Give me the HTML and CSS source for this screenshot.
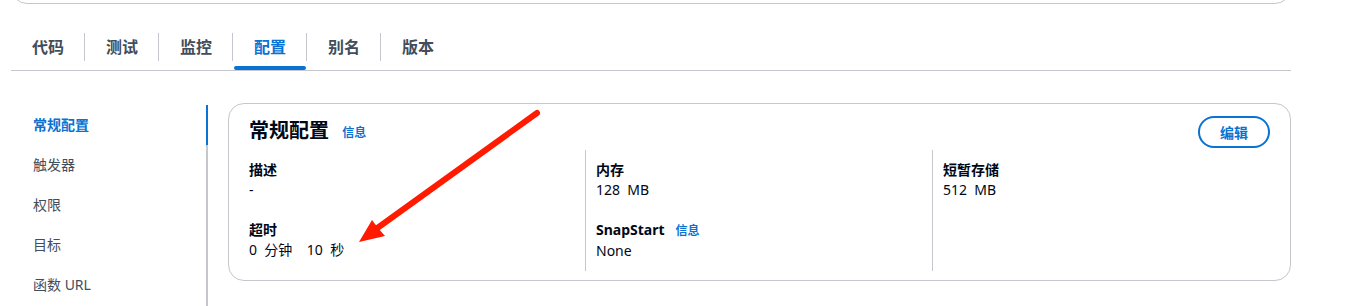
FILE: index.html
```html
<!DOCTYPE html>
<html lang="zh-CN">
<head>
    <meta charset="UTF-8">
    <title>配置</title>
    <link rel="stylesheet" href="styles.css">
</head>
<body>
    <div class="page">
        <div class="top-panel"></div>

        <div class="tabs">
            <div class="tab"><span class="tab-label">代码</span></div>
            <div class="tab"><span class="tab-label">测试</span></div>
            <div class="tab"><span class="tab-label">监控</span></div>
            <div class="tab active"><span class="tab-label">配置</span></div>
            <div class="tab"><span class="tab-label">别名</span></div>
            <div class="tab"><span class="tab-label">版本</span></div>
        </div>

        <div class="layout">
            <ul class="side-nav">
                <li class="active">常规配置</li>
                <li>触发器</li>
                <li>权限</li>
                <li>目标</li>
                <li>函数 URL</li>
            </ul>

            <div class="card">
                <div class="card-header">
                    <h2>常规配置 <a class="info">信息</a></h2>
                    <button class="btn">编辑</button>
                </div>
                <div class="columns">
                    <div class="col">
                        <div class="field">
                            <div class="label">描述</div>
                            <div class="value">-</div>
                        </div>
                        <div class="field">
                            <div class="label">超时</div>
                            <div class="value">0&nbsp;&nbsp;分钟&nbsp;&nbsp;&nbsp;&nbsp;10&nbsp;&nbsp;秒</div>
                        </div>
                    </div>
                    <div class="col">
                        <div class="field">
                            <div class="label">内存</div>
                            <div class="value">128&nbsp;&nbsp;MB</div>
                        </div>
                        <div class="field">
                            <div class="label">SnapStart<a class="info">信息</a></div>
                            <div class="value">None</div>
                        </div>
                    </div>
                    <div class="col">
                        <div class="field">
                            <div class="label">短暂存储</div>
                            <div class="value">512&nbsp;&nbsp;MB</div>
                        </div>
                    </div>
                </div>
            </div>
        </div>
    </div>

    <!-- 标注箭头 -->
    <svg class="arrow" width="1354" height="306" viewBox="0 0 1354 306">
        <line x1="537" y1="113" x2="376" y2="229" stroke="#ff1a00" stroke-width="6" stroke-linecap="round"/>
        <polygon points="359,242 372,220 378,228 385,236" fill="#ff1a00"/>
    </svg>
</body>
</html>
```

FILE: styles.css
```css
body {
    margin: 0;
    font-family: "Noto Sans", "Noto Sans CJK SC", sans-serif;
    font-size: 14px;
    color: #000716;
    background-color: #fff;
    overflow: hidden;
}
.page { margin: 0 63px 0 11px; }

.top-panel {
    box-sizing: border-box;
    height: 40px;
    margin-top: -36px;
    border: 1px solid #c6c6cd;
    border-radius: 16px;
}

/* 选项卡 */
.tabs {
    display: flex;
    margin-top: 25px;
    border-bottom: 1px solid #c6c6cd;
}
.tab {
    position: relative;
    padding: 4px 0 9px;
    font-size: 16px;
    font-weight: 700;
    color: #414d5c;
}
.tab-label {
    display: block;
    padding: 4px 20px 4px 21px;
    line-height: 20px;
    border-left: 1px solid #c6c6cd;
}
.tab:first-child .tab-label { border-left: none; }
.tab.active { color: #0972d3; }
.tab.active::after {
    content: "";
    position: absolute;
    left: 2px;
    right: 0;
    bottom: 0;
    height: 4px;
    border-radius: 2px;
    background-color: #0972d3;
}

.layout {
    display: flex;
    align-items: flex-start;
    gap: 20px;
    margin-top: 32px;
}

/* 左侧导航 */
.side-nav {
    list-style: none;
    margin: 2px 0 0;
    padding: 0 0 0 22px;
    width: 173px;
    border-right: 2px solid #c6c6cd;
    height: 201px;
}
.side-nav li {
    line-height: 40px;
    height: 40px;
    color: #414d5c;
    margin-right: -2px;
    border-right: 2px solid transparent;
}
.side-nav li.active {
    color: #0972d3;
    font-weight: 700;
    border-right-color: #0972d3;
}

/* 卡片 */
.card {
    flex: 1;
    border: 1px solid #c6c6cd;
    border-radius: 16px;
    padding: 12px 20px 9px;
}
.card-header {
    display: flex;
    align-items: center;
    justify-content: space-between;
    height: 32px;
}
.card-header h2 {
    margin: 0;
    font-size: 20px;
    font-weight: 700;
    line-height: 24px;
}
.info {
    margin-left: 8px;
    font-size: 12px;
    font-weight: 700;
    color: #0972d3;
    vertical-align: 1px;
}
.btn {
    width: 72px;
    height: 32px;
    border: 2px solid #0972d3;
    border-radius: 16px;
    background: #fff;
    color: #0972d3;
    font-family: inherit;
    font-size: 14px;
    font-weight: 700;
    padding: 0;
}

.columns {
    display: grid;
    grid-template-columns: 336px 347px 1fr;
    margin-top: 2px;
}
.col {
    display: flex;
    flex-direction: column;
    gap: 20px;
    padding: 10px 0;
}
.col + .col {
    border-left: 1px solid #c6c6cd;
    padding-left: 10px;
}
.field { line-height: 20px; }
.label { font-weight: 700; }
.label .info { margin-left: 11px; vertical-align: 0; }

.arrow {
    position: absolute;
    left: 0;
    top: 0;
    pointer-events: none;
}
```
